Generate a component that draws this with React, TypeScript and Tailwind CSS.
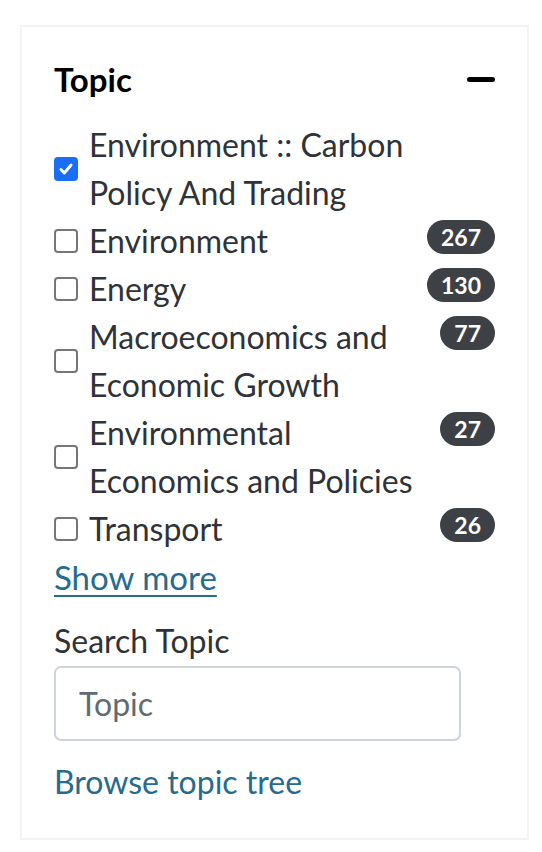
const items = [
  { label: "Environment :: Carbon Policy And Trading", checked: true },
  { label: "Environment", count: 267 },
  { label: "Energy", count: 130 },
  { label: "Macroeconomics and Economic Growth", count: 77 },
  { label: "Environmental Economics and Policies", count: 27 },
  { label: "Transport", count: 26 },
];

const Checkbox = ({ checked }: { checked?: boolean }) =>
  checked ? (
    <span className="flex h-6 w-6 shrink-0 items-center justify-center rounded-[4px] bg-[#1a6ef5]">
      <svg viewBox="0 0 16 16" className="h-[18px] w-[18px]" fill="none" stroke="white" strokeWidth="2.6" strokeLinecap="round" strokeLinejoin="round">
        <path d="M3.5 8.5l3 3 6-7" />
      </svg>
    </span>
  ) : (
    <span className="h-6 w-6 shrink-0 rounded-[4px] border-2 border-[#767676] bg-white" />
  );

const App = () => {
  return (
    <div className="min-h-[852px] bg-white pt-[25px] pl-[20px] font-['Lato',sans-serif]">
      <div className="h-[815px] w-[509px] border-2 border-[#f3f3f3] px-[32px] pt-[28px]">
        <div className="flex items-center justify-between">
          <h2 className="text-[33px] font-bold leading-[48px] text-black">Topic</h2>
          <span className="block h-[5px] w-[28px] rounded-full bg-black" />
        </div>
        <ul className="mt-[18px]">
          {items.map((item) => (
            <li key={item.label} className="flex items-start gap-[11px] text-[32px] leading-[48px] text-[#2f3337]">
              <div className="flex flex-1 items-center gap-[11px] self-stretch">
                <Checkbox checked={item.checked} />
                <span className="max-w-[335px]">{item.label}</span>
              </div>
              {item.count !== undefined && (
                <span className="mt-[3px] rounded-full bg-[#3d4146] px-[14px] text-[23px] font-bold leading-[34px] text-white">
                  {item.count}
                </span>
              )}
            </li>
          ))}
        </ul>
        <a href="#" className="block text-[33px] leading-[48px] text-[#266b8f] underline decoration-2 underline-offset-[5px]">
          Show more
        </a>
        <label className="mt-[16px] block text-[32px] leading-[48px] text-[#2f3337]">Search Topic</label>
        <div className="mt-[1px] flex h-[75px] w-[407px] items-center rounded-[7px] border-2 border-[#ced4da] px-[23px] text-[32px] text-[#626a72]">
          Topic
        </div>
        <a href="#" className="mt-[17px] block text-[32px] leading-[48px] text-[#266b8f]">
          Browse topic tree
        </a>
      </div>
    </div>
  );
};

export default App;
